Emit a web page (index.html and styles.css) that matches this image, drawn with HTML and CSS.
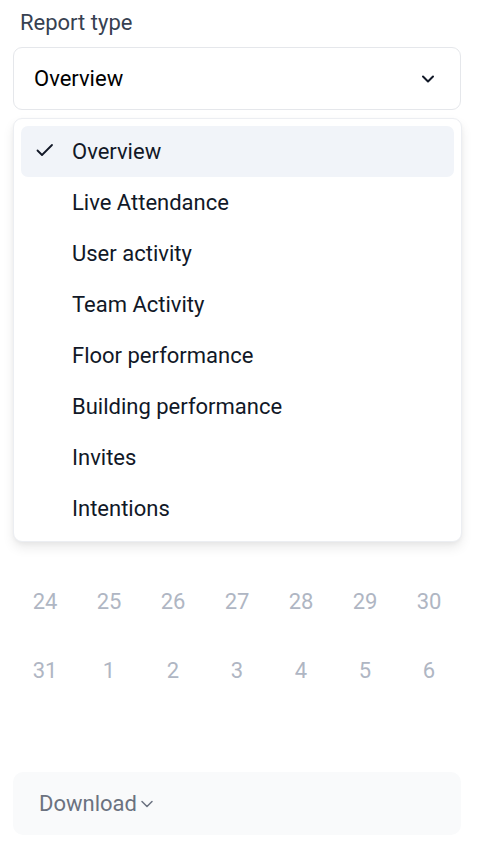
FILE: index.html
```html
<!DOCTYPE html>
<html lang="en">

<head>
  <meta charset="UTF-8">
  <meta name="viewport" content="width=device-width, initial-scale=1.0">
  <title>Report</title>
  <link rel="stylesheet" href="styles.css">
</head>

<body>
  <div class="page">
    <!-- Report type -->
    <div class="field">
      <label class="field-label">Report type</label>
      <div class="select-wrap">
        <button class="select">
          <span>Overview</span>
          <svg class="chevron" width="20" height="20" viewBox="0 0 20 20" fill="none">
            <path d="M5 7.5L10 12.5L15 7.5" stroke="#111827" stroke-width="2" stroke-linecap="round" stroke-linejoin="round" />
          </svg>
        </button>

        <ul class="options">
          <li class="option active">
            <svg class="check" width="24" height="24" viewBox="0 0 24 24" fill="none">
              <path d="M4.5 12.5L9 17L19 7" stroke="#111827" stroke-width="1.8" stroke-linecap="round" stroke-linejoin="round" />
            </svg>
            <span>Overview</span>
          </li>
          <li class="option"><span>Live Attendance</span></li>
          <li class="option"><span>User activity</span></li>
          <li class="option"><span>Team Activity</span></li>
          <li class="option"><span>Floor performance</span></li>
          <li class="option"><span>Building performance</span></li>
          <li class="option"><span>Invites</span></li>
          <li class="option"><span>Intentions</span></li>
        </ul>
      </div>
    </div>

    <!-- Calendar (partly hidden behind menu) -->
    <div class="calendar">
      <span>24</span><span>25</span><span>26</span><span>27</span><span>28</span><span>29</span><span>30</span>
      <span>31</span><span>1</span><span>2</span><span>3</span><span>4</span><span>5</span><span>6</span>
    </div>

    <!-- Download -->
    <button class="download">
      <span>Download</span>
      <svg width="14" height="14" viewBox="0 0 14 14" fill="none">
        <path d="M2 4.5L7 9.5L12 4.5" stroke="#6b7280" stroke-width="1.5" stroke-linecap="round" stroke-linejoin="round" />
      </svg>
    </button>
  </div>
</body>

</html>
```

FILE: styles.css
```css
body {
  font-family: Roboto, "Noto Sans", Arial, sans-serif;
  margin: 0;
  padding: 0;
  background-color: #ffffff;
  color: #111827;
}

.page {
  padding: 10px 17px 0 13px;
}

/* Field */
.field-label {
  display: block;
  font-size: 22px;
  color: #374151;
  padding-left: 7px;
  line-height: 26px;
  margin-bottom: 11px;
}

.select-wrap {
  position: relative;
}

.select {
  display: flex;
  justify-content: space-between;
  align-items: center;
  width: 100%;
  height: 63px;
  padding: 0 22px 0 20px;
  background-color: #ffffff;
  border: 1px solid #e5e7eb;
  border-radius: 9px;
  font-family: inherit;
  font-size: 22px;
  color: #000000;
  box-sizing: border-box;
}

/* Dropdown menu */
.options {
  position: absolute;
  top: 71px;
  left: 0;
  right: -1px;
  margin: 0;
  padding: 7px;
  list-style: none;
  background-color: #ffffff;
  border: 1px solid #eceef2;
  border-radius: 9px;
  box-shadow: 0 6px 12px rgba(0, 0, 0, 0.08), 0 2px 4px rgba(0, 0, 0, 0.04);
  z-index: 2;
}

.option {
  position: relative;
  height: 51px;
  display: flex;
  align-items: center;
  padding-left: 51px;
  font-size: 22px;
  color: #111827;
  border-radius: 7px;
}

.option.active {
  background-color: #f1f4f9;
}

.option .check {
  position: absolute;
  left: 12px;
  top: 12px;
}

/* Calendar */
.calendar {
  display: grid;
  grid-template-columns: repeat(7, 1fr);
  margin-top: 457px;
  font-size: 22px;
  color: #afb6c3;
}

.calendar span {
  height: 69px;
  display: flex;
  align-items: center;
  justify-content: center;
}

/* Download */
.download {
  display: flex;
  align-items: center;
  gap: 3px;
  width: 100%;
  height: 63px;
  margin-top: 67px;
  padding: 0 26px;
  background-color: #f9fafb;
  border: none;
  border-radius: 10px;
  font-family: inherit;
  font-size: 22px;
  color: #6b7280;
  box-sizing: border-box;
}
```
